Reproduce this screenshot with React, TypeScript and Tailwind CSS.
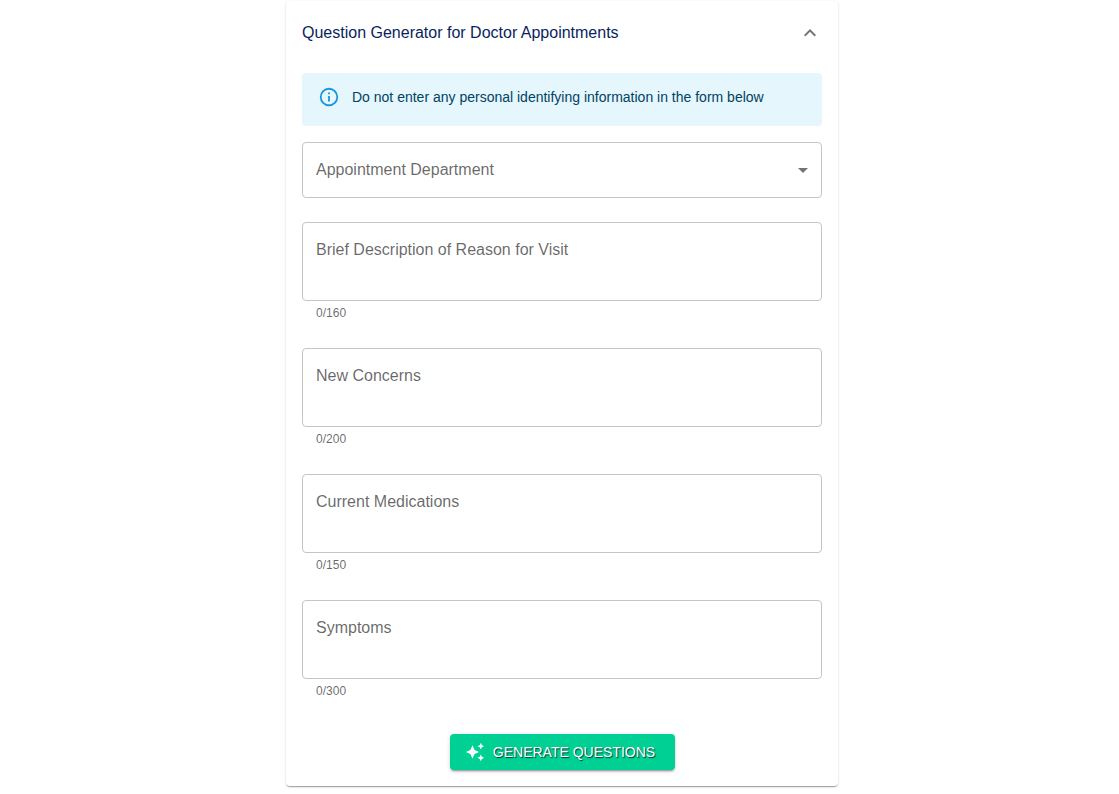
import { useId, useState } from "react";
import type { FormEvent } from "react";

const DEPARTMENTS = [
  "Cardiology",
  "Dermatology",
  "Family Medicine",
  "Neurology",
  "Orthopedics",
  "Pediatrics",
];

const TEXT_FIELDS = [
  { label: "Brief Description of Reason for Visit", limit: 160 },
  { label: "New Concerns", limit: 200 },
  { label: "Current Medications", limit: 150 },
  { label: "Symptoms", limit: 300 },
];

const CONTROL =
  "block w-full appearance-none rounded border border-[#c4c4c4] bg-transparent px-[13px] py-4 text-base text-black/85 outline-none hover:border-black/85 focus:border-[#1976d2]";

function FloatingLabel({ htmlFor, raised, text }: { htmlFor: string; raised: boolean; text: string }) {
  return (
    <label
      htmlFor={htmlFor}
      className={
        raised
          ? "pointer-events-none absolute -top-2 left-2.5 bg-white px-1 text-xs text-black/60"
          : "pointer-events-none absolute top-4 left-3.5 text-base text-black/60"
      }
    >
      {text}
    </label>
  );
}

function DepartmentSelect() {
  const id = useId();
  const [value, setValue] = useState("");
  return (
    <div className="relative">
      <select
        id={id}
        value={value}
        onChange={(e) => setValue(e.target.value)}
        className={`${CONTROL} h-14`}
      >
        <option value="" />
        {DEPARTMENTS.map((name) => (
          <option key={name}>{name}</option>
        ))}
      </select>
      <FloatingLabel htmlFor={id} raised={value !== ""} text="Appointment Department" />
      <svg
        viewBox="0 0 24 24"
        className="pointer-events-none absolute top-4 right-[7px] size-6 fill-black/55"
        aria-hidden="true"
      >
        <path d="M7 10l5 5 5-5z" />
      </svg>
    </div>
  );
}

function LimitedTextArea({ label, limit }: { label: string; limit: number }) {
  const id = useId();
  const [value, setValue] = useState("");
  const [focused, setFocused] = useState(false);
  return (
    <div>
      <div className="relative">
        <textarea
          id={id}
          value={value}
          maxLength={limit}
          onChange={(e) => setValue(e.target.value)}
          onFocus={() => setFocused(true)}
          onBlur={() => setFocused(false)}
          aria-describedby={`${id}-count`}
          className={`${CONTROL} h-[79px] resize-none`}
        />
        <FloatingLabel htmlFor={id} raised={focused || value !== ""} text={label} />
      </div>
      <p id={`${id}-count`} className="px-3.5 pt-0.5 pb-px text-xs leading-5 text-black/60">
        {value.length}/{limit}
      </p>
    </div>
  );
}

export default function App() {
  const [open, setOpen] = useState(true);
  const submit = (e: FormEvent) => e.preventDefault();

  return (
    <main className="flex justify-center bg-white pt-px pb-2 pl-[5px] font-['Liberation_Sans',Arial,sans-serif]">
      <section className="w-full max-w-[552px] rounded bg-white shadow-[0_2px_1px_-1px_rgba(0,0,0,0.2),0_1px_1px_0_rgba(0,0,0,0.14),0_1px_3px_0_rgba(0,0,0,0.12)]">
        <h1>
          <button
            type="button"
            aria-expanded={open}
            onClick={() => setOpen(!open)}
            className="flex h-16 w-full items-center justify-between px-4 text-left text-base text-[#0a1f5c]"
          >
            Question Generator for Doctor Appointments
            <svg
              viewBox="0 0 24 24"
              className={open ? "size-6 fill-black/55" : "size-6 rotate-180 fill-black/55"}
              aria-hidden="true"
            >
              <path d="M12 8l-6 6 1.41 1.41L12 10.83l4.59 4.58L18 14z" />
            </svg>
          </button>
        </h1>

        {open && (
          <form onSubmit={submit} className="flex flex-col px-4 pt-2 pb-4">
            <div role="note" className="mb-4 flex gap-3 rounded bg-[#e5f6fd] px-4 pt-[13px] pb-[18px]">
              <svg viewBox="0 0 24 24" className="size-[22px] shrink-0 fill-[#1796dd]" aria-hidden="true">
                <path d="M11,9H13V7H11M12,20C7.59,20 4,16.41 4,12C4,7.59 7.59,4 12,4C16.41,4 20,7.59 20,12C20,16.41 16.41,20 12,20M12,2A10,10 0 0,0 2,12A10,10 0 0,0 12,22A10,10 0 0,0 22,12A10,10 0 0,0 12,2M11,17H13V11H11V17Z" />
              </svg>
              <p className="text-sm leading-[22px] text-[#014361]">
                Do not enter any personal identifying information in the form below
              </p>
            </div>

            <div className="flex flex-col gap-6">
              <DepartmentSelect />
              {TEXT_FIELDS.map((field) => (
                <LimitedTextArea key={field.label} label={field.label} limit={field.limit} />
              ))}
            </div>

            <button
              type="submit"
              className="mt-8 flex h-9 min-w-[225px] items-center justify-center gap-2 self-center rounded bg-[#00d094] pr-4 pl-3 text-sm text-white uppercase shadow-[0_3px_1px_-2px_rgba(0,0,0,0.2),0_2px_2px_0_rgba(0,0,0,0.14),0_1px_5px_0_rgba(0,0,0,0.12)] [text-shadow:1px_1px_1px_rgba(0,0,0,0.7)] hover:bg-[#00b883]"
            >
              <svg viewBox="0 0 24 24" className="size-5 fill-current" aria-hidden="true">
                <path d="M19 9l1.25-2.75L23 5l-2.75-1.25L19 1l-1.25 2.75L15 5l2.75 1.25L19 9zm-7.5.5L9 4 6.5 9.5 1 12l5.5 2.5L9 20l2.5-5.5L17 12l-5.5-2.5zM19 15l-1.25 2.75L15 19l2.75 1.25L19 23l1.25-2.75L23 19l-2.75-1.25L19 15z" />
              </svg>
              Generate Questions
            </button>
          </form>
        )}
      </section>
    </main>
  );
}
